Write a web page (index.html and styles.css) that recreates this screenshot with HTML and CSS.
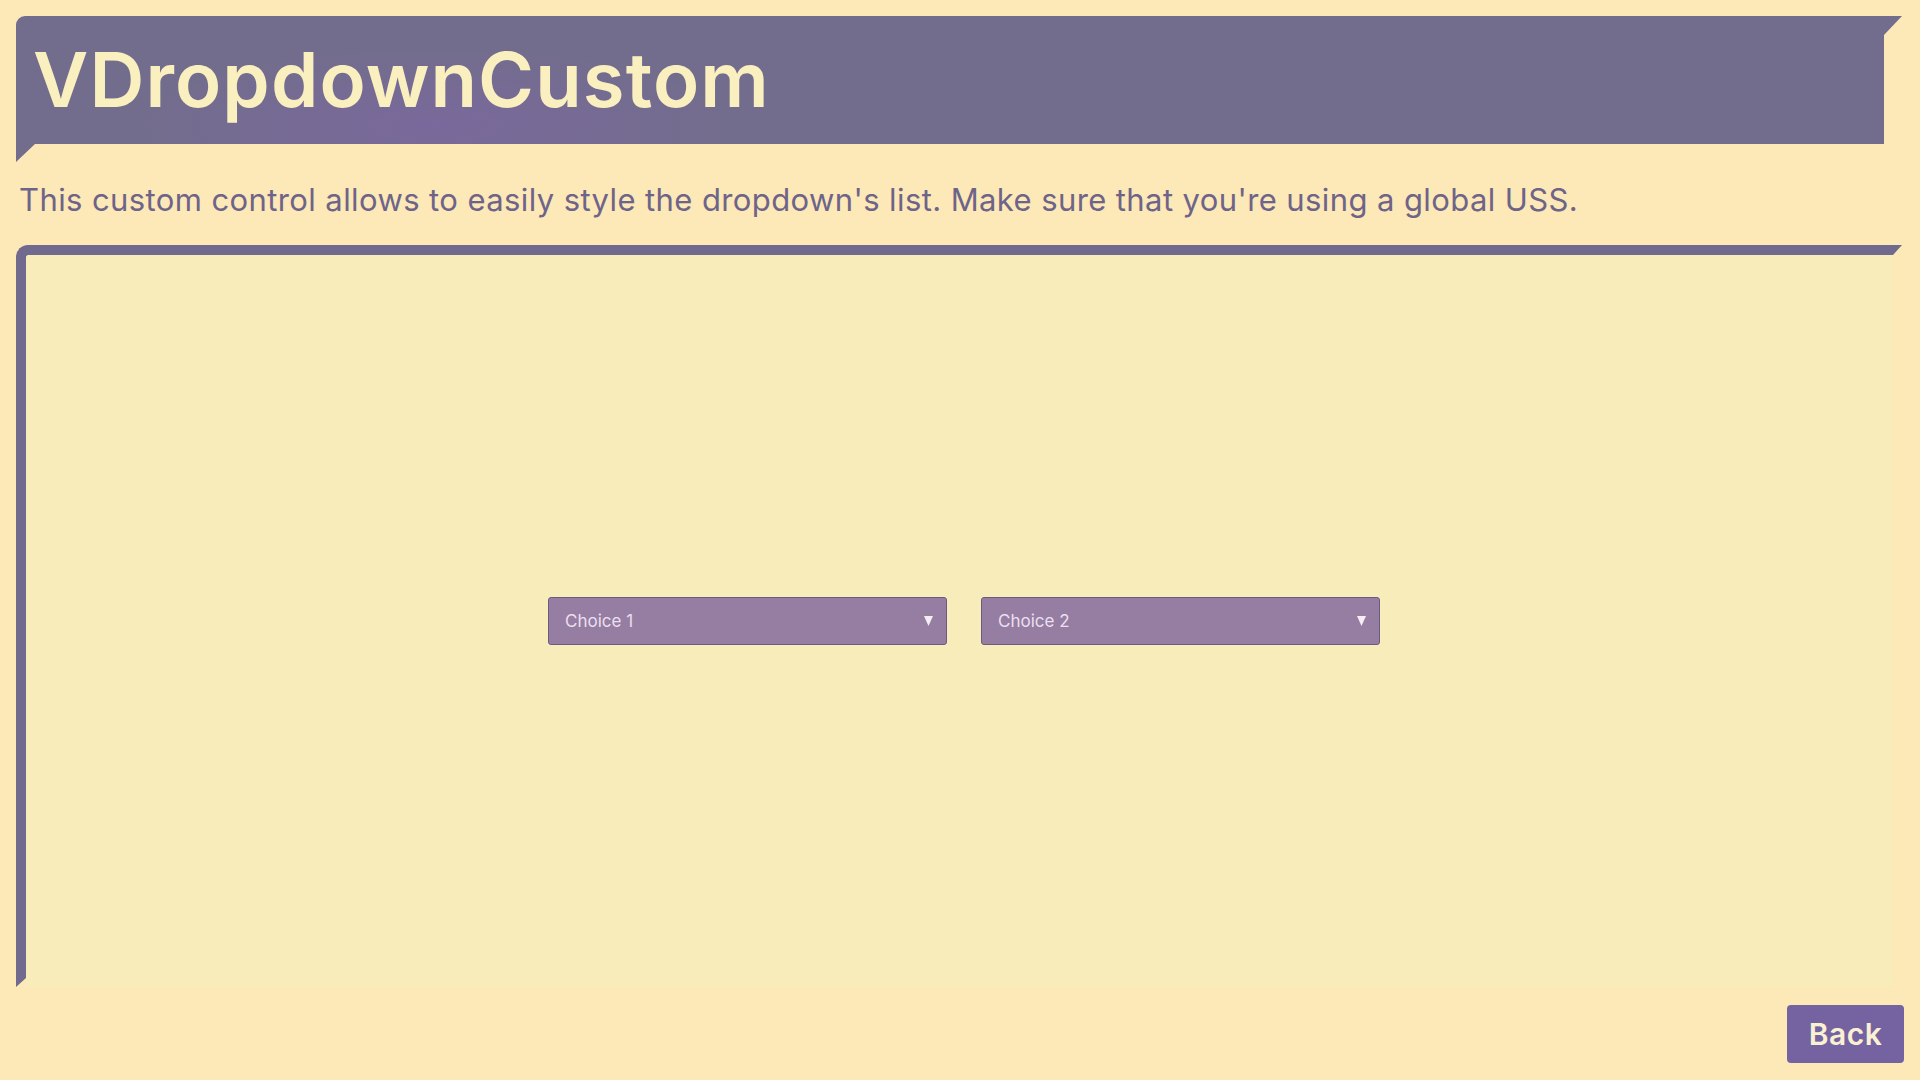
FILE: index.html
```html
<!DOCTYPE html>
<html>
<head>
<meta charset="utf-8">
<link rel="stylesheet" href="styles.css">
</head>
<body>
<div class="page">
  <div class="header">
    <h1 class="title">VDropdownCustom</h1>
  </div>
  <p class="subtitle">This custom control allows to easily style the dropdown's list. Make sure that you're using a global USS.</p>
  <div class="panel">
    <div class="dropdown">
      <span class="dd-label">Choice 1</span>
      <svg class="dd-arrow" width="9" height="10" viewBox="0 0 9 10"><polygon points="0,0 9,0 4.5,10" fill="#f6eef4"/></svg>
    </div>
    <div class="dropdown">
      <span class="dd-label">Choice 2</span>
      <svg class="dd-arrow" width="9" height="10" viewBox="0 0 9 10"><polygon points="0,0 9,0 4.5,10" fill="#f6eef4"/></svg>
    </div>
  </div>
  <div class="footer">
    <button class="back">Back</button>
  </div>
</div>
</body>
</html>
```

FILE: styles.css
```css
html, body {
  margin: 0;
  padding: 0;
  height: 100%;
}
body {
  background: #fde8b7;
  font-family: "Inter", "Noto Sans", sans-serif;
}
.page {
  box-sizing: border-box;
  height: 1080px;
  padding: 16px 18px 17px 16px;
  display: flex;
  flex-direction: column;
}
.header {
  height: 146px;
  box-sizing: border-box;
  padding: 25px 0 0 17px;
  background:
    radial-gradient(ellipse 420px 110px at 420px 110px, rgba(128,100,170,0.5), rgba(128,100,170,0) 70%),
    #736d8d;
  border-top-left-radius: 9px;
  clip-path: polygon(0 0, 100% 0, calc(100% - 18px) 19px, calc(100% - 18px) 128px, 19px 128px, 0 146px);
}
.title {
  margin: 0;
  font-size: 76px;
  line-height: 76px;
  font-weight: 600;
  color: #f9efbf;
  letter-spacing: 1.1px;
}
.subtitle {
  margin: 18px 0 0 3px;
  font-size: 31px;
  line-height: 40px;
  color: #6e6489;
  font-weight: 400;
  letter-spacing: 0.4px;
}
.panel {
  flex: 1;
  margin-top: 25px;
  background: #f8ecbb;
  border-top: 10px solid #706a8f;
  border-left: 10px solid #706a8f;
  border-top-left-radius: 12px;
  clip-path: polygon(0 0, 100% 0, calc(100% - 9px) 10px, calc(100% - 9px) 100%, 10px 100%, 10px calc(100% - 9px), 0 100%);
  display: flex;
  justify-content: center;
  align-items: center;
  gap: 34px;
}
.dropdown {
  box-sizing: border-box;
  width: 399px;
  height: 48px;
  background: #957ea1;
  border: 1.5px solid #6b5a84;
  border-radius: 3px;
  display: flex;
  align-items: center;
  justify-content: space-between;
  padding: 0 13px 0 16px;
}
.dd-label {
  font-size: 17px;
  color: #ecdff2;
}
.dd-arrow {
  display: block;
}
.footer {
  display: flex;
  justify-content: flex-end;
  margin-top: 18px;
}
.back {
  width: 117px;
  height: 58px;
  background: #7462a1;
  border: none;
  border-radius: 4px;
  color: #faf0d2;
  font-family: "Inter", "Noto Sans", sans-serif;
  font-weight: 600;
  font-size: 30px;
  letter-spacing: 0.5px;
  padding: 0;
  margin-right: -2px;
}
```
